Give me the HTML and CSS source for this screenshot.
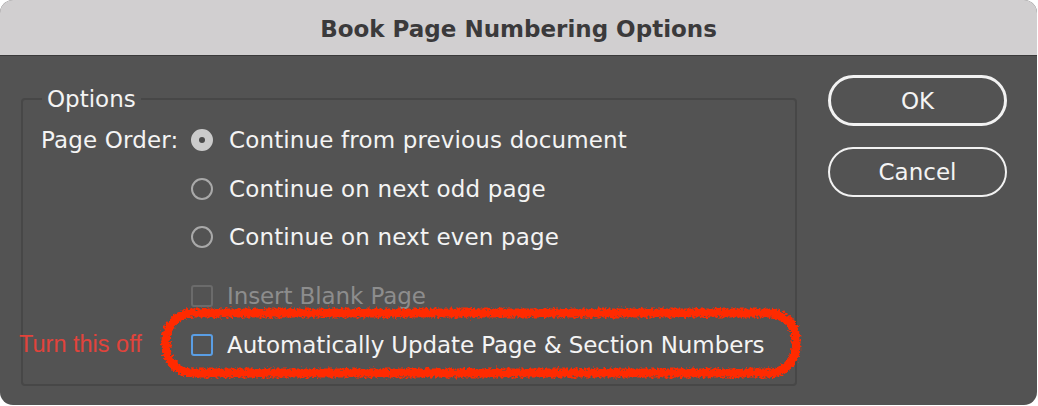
FILE: index.html
```html
<!DOCTYPE html>
<html>
<head>
<meta charset="utf-8">
<link rel="stylesheet" href="styles.css">
</head>
<body>
<div class="window">
  <div class="titlebar">Book Page Numbering Options</div>
  <div class="content">
    <fieldset class="group">
      <legend class="legend">Options</legend>
      <div class="order">
        <div class="order-label">Page Order:</div>
        <div class="choices">
          <div class="row"><span class="radio checked"></span><span>Continue from previous document</span></div>
          <div class="row"><span class="radio"></span><span>Continue on next odd page</span></div>
          <div class="row"><span class="radio"></span><span>Continue on next even page</span></div>
          <div class="row row-check cb disabled"><span class="check"></span><span>Insert Blank Page</span></div>
          <div class="row cb"><span class="check focus"></span><span>Automatically Update Page &amp; Section Numbers</span></div>
        </div>
      </div>
    </fieldset>
    <div class="buttons">
      <div class="btn btn-default">OK</div>
      <div class="btn">Cancel</div>
    </div>
  </div>
  <div class="note">Turn this off</div>
  <svg class="scribble" width="660" height="90" viewBox="0 0 660 90">
    <defs>
      <filter id="rough" x="-5%" y="-20%" width="110%" height="140%">
        <feTurbulence type="fractalNoise" baseFrequency="0.4" numOctaves="2" seed="3" result="n"/>
        <feDisplacementMap in="SourceGraphic" in2="n" scale="7" xChannelSelector="R" yChannelSelector="G"/>
      </filter>
    </defs>
    <rect x="13" y="13" width="630" height="60" rx="27" ry="27" fill="none" stroke="#ff2a00" stroke-width="9" filter="url(#rough)"/>
  </svg>
</div>
</body>
</html>
```
FILE: styles.css
```css
html, body {
  margin: 0;
  padding: 0;
  background: #ffffff;
}
.window {
  position: relative;
  width: 1037px;
  height: 405px;
  border-radius: 13px;
  overflow: hidden;
  background: #535353;
  font-family: "DejaVu Sans", "Noto Sans", sans-serif;
  color: #f4f4f4;
}
.titlebar {
  height: 56px;
  background: #d1cfd0;
  border-bottom: 1px solid #3a3a3a;
  box-sizing: border-box;
  display: flex;
  align-items: center;
  justify-content: center;
  font-weight: 700;
  font-size: 23px;
  color: #3b3a3b;
  padding-top: 2px;
}
.content {
  display: flex;
  align-items: flex-start;
  padding: 27px 0 0 21px;
}
.group {
  margin: 0;
  width: 776px;
  height: 303px;
  box-sizing: border-box;
  border: 2px solid #474747;
  border-radius: 4px;
  padding: 0 0 0 18px;
}
.legend {
  padding: 0 5px;
  margin-left: 1px;
  font-size: 23px;
  line-height: 32px;
}
.order {
  display: flex;
  align-items: flex-start;
  font-size: 23px;
  letter-spacing: 0.15px;
}
.order-label {
  width: 150px;
  line-height: 48px;
  margin-top: 1px;
}
.choices {
  display: flex;
  flex-direction: column;
  margin-top: 1px;
}
.row {
  display: flex;
  align-items: center;
  height: 48.5px;
}
.row-check {
  margin-top: 10.5px;
}
.row > span:last-child {
  margin-left: 16px;
}
.row.cb {
  letter-spacing: -0.1px;
}
.row.cb > span:last-child {
  margin-left: 14px;
}
.radio {
  width: 18px;
  height: 18px;
  border: 2px solid #a9a9a9;
  border-radius: 50%;
  flex: none;
}
.radio.checked {
  border-color: #cbcbcb;
  background: #cbcbcb;
  position: relative;
}
.radio.checked::after {
  content: "";
  position: absolute;
  left: 6px;
  top: 6px;
  width: 6px;
  height: 6px;
  border-radius: 50%;
  background: #4a4a4a;
}
.check {
  width: 18px;
  height: 18px;
  border: 2px solid #9a9a9a;
  border-radius: 3px;
  flex: none;
}
.check.focus {
  border-color: #5a9ee4;
}
.disabled {
  color: #8d8d8d;
}
.disabled .check {
  border-color: #6b6b6b;
}
.buttons {
  display: flex;
  flex-direction: column;
  gap: 21px;
  margin: -8px 0 0 31px;
}
.btn {
  width: 179px;
  height: 50px;
  box-sizing: border-box;
  border: 2px solid #f2f2f2;
  border-radius: 26px;
  display: flex;
  align-items: center;
  justify-content: center;
  font-size: 23px;
}
.btn-default {
  border-width: 3px;
  height: 51px;
}
.note {
  position: absolute;
  left: 19px;
  top: 331px;
  font-family: "Liberation Sans", Arial, sans-serif;
  font-size: 23.5px;
  color: #e2433b;
}
.scribble {
  position: absolute;
  left: 153px;
  top: 300px;
}
```
